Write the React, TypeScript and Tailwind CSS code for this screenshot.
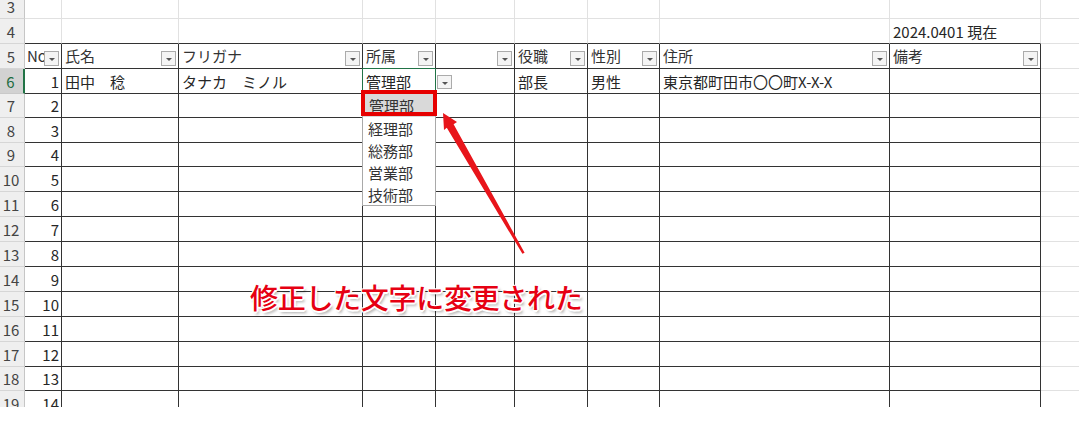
import React from 'react';

const COLW = ['w-[37px]', 'w-[117px]', 'w-[184px]', 'w-[73px]', 'w-[79px]', 'w-[73px]', 'w-[72px]', 'w-[230px]', 'w-[151px]'];
const HEAD = ['No', '氏名', 'フリガナ', '所属', '', '役職', '性別', '住所', '備考'];
const ROW6 = ['1', '田中　稔', 'タナカ　ミノル', '管理部', '', '部長', '男性', '東京都町田市〇〇町X-X-X', ''];

const BODY_H = ['h-[24px]', 'h-[25px]', 'h-[24px]', 'h-[25px]', 'h-[25px]', 'h-[25px]', 'h-[25px]', 'h-[25px]', 'h-[25px]', 'h-[25px]', 'h-[25px]', 'h-[24px]', 'h-[25px]'];

function RowHeader({ n, active }: { n: number; active?: boolean }) {
  return active ? (
    <div className="w-[25px] shrink-0 border-r-2 border-b border-r-[#217346] border-b-[#c9c9c9] bg-[#d2d2d2] text-[#1d6b40] flex items-center justify-center pr-[2px]">
      {n}
    </div>
  ) : (
    <div className="w-[25px] shrink-0 border-r border-b border-r-[#c6c6c6] border-b-[#d6d6d6] bg-[#efefef] text-[#444] flex items-center justify-center pr-[2px]">
      {n}
    </div>
  );
}

function FilterBtn() {
  return (
    <div className="shrink-0 self-end mb-[2px] mr-[2px] w-[15px] h-[15px] border border-[#ababab] bg-[#f4f4f4] flex items-center justify-center">
      <div className="w-0 h-0 border-x-[3px] border-x-transparent border-t-[3px] border-t-[#555] mt-[2px]" />
    </div>
  );
}

function TopRow({ n, h, extra }: { n: number; h: string; extra?: React.ReactNode }) {
  return (
    <div className={`flex ${h} shrink-0`}>
      <RowHeader n={n} />
      {COLW.map((w, i) => (
        <div
          key={i}
          className={`${w} shrink-0 border-r border-b border-r-[#e1e1e1] ${n === 4 ? 'border-b-[#333]' : 'border-b-[#e1e1e1]'} flex items-center pl-[3px] whitespace-nowrap text-[#262626]`}
        >
          {i === 8 ? extra : null}
        </div>
      ))}
      <div className="flex-1 border-b border-b-[#e1e1e1]" />
    </div>
  );
}

export default function App() {
  return (
    <div className="relative w-[1079px] h-[428px] overflow-hidden bg-white font-['Noto_Sans_CJK_JP','Noto_Sans',sans-serif] text-[15px] leading-none">
      <div className="h-[407px] overflow-hidden flex flex-col">
        <div className="mt-[-6px] flex flex-col">
          <TopRow n={3} h="h-[25px]" />
          <TopRow n={4} h="h-[25px]" extra={<span>2024.0401 現在</span>} />

          {/* header row 5 */}
          <div className="flex h-[25px] shrink-0">
            <RowHeader n={5} />
            {COLW.map((w, i) => (
              <div key={i} className={`${w} shrink-0 border-r border-b border-[#333] flex min-w-0`}>
                <span className={`flex-1 min-w-0 overflow-x-hidden whitespace-nowrap self-center leading-[20px] text-[#333] ${i === 0 ? 'pl-[2px]' : 'pl-[3px]'}`}>
                  {HEAD[i]}
                </span>
                <FilterBtn />
              </div>
            ))}
            <div className="flex-1 border-b border-b-[#e1e1e1]" />
          </div>

          {/* data row 6 */}
          <div className="flex h-[25px] shrink-0">
            <RowHeader n={6} active />
            {COLW.map((w, i) => (
              <div
                key={i}
                className={`${w} shrink-0 border-r border-b border-[#333] flex items-center whitespace-nowrap text-[#262626] ${i === 0 ? 'justify-end pr-[2px]' : 'pl-[3px]'}`}
              >
                {ROW6[i]}
              </div>
            ))}
            <div className="flex-1 border-b border-b-[#e1e1e1]" />
          </div>

          {BODY_H.map((h, r) => (
            <div key={r} className={`flex ${h} shrink-0`}>
              <RowHeader n={r + 7} />
              {COLW.map((w, i) => (
                <div
                  key={i}
                  className={`${w} shrink-0 border-r border-b border-[#333] flex items-center whitespace-nowrap text-[#262626] ${i === 0 ? 'justify-end pr-[2px]' : 'pl-[3px]'}`}
                >
                  {i === 0 ? r + 2 : null}
                </div>
              ))}
              <div className="flex-1 border-b border-b-[#e1e1e1]" />
            </div>
          ))}
        </div>
      </div>

      {/* selected cell border */}
      <div className="absolute left-[362px] top-[68px] w-[74px] h-[26px] border border-[#217346]" />

      {/* cell dropdown button */}
      <div className="absolute left-[437px] top-[75px] w-[15px] h-[14px] border border-[#ababab] bg-[#f4f4f4] flex items-center justify-center">
        <div className="w-0 h-0 border-x-[3px] border-x-transparent border-t-[3px] border-t-[#555] mt-[2px]" />
      </div>

      {/* dropdown list */}
      <div className="absolute left-[362px] top-[92px] w-[74px] border border-[#a9a9a9] bg-white flex flex-col text-[#333]">
        <div className="h-[24px] bg-[#d9d9d9] flex items-center pl-[6px]">管理部</div>
        <div className="h-[22px] flex items-center pl-[5px]">経理部</div>
        <div className="h-[22px] flex items-center pl-[5px]">総務部</div>
        <div className="h-[22px] flex items-center pl-[5px]">営業部</div>
        <div className="h-[22px] flex items-center pl-[5px]">技術部</div>
      </div>

      {/* red highlight box */}
      <div className="absolute left-[361px] top-[90px] w-[76px] h-[26px] border-[4px] border-[#e60000]" />

      {/* arrow */}
      <svg className="absolute left-0 top-0 pointer-events-none" width="1079" height="428" viewBox="0 0 1079 428">
        <polygon
          points="443,113 457,122 453.6,124.2 524.6,252.8 522.4,253.8 446.8,127.8 444,130"
          fill="#e8151b"
        />
      </svg>

      {/* annotation */}
      <div className="absolute left-[250px] top-[283px] text-[28px] leading-none font-medium tracking-[-0.3px] text-[#e60012] whitespace-nowrap [text-shadow:1px_1px_0_#fff,-1px_-1px_0_#fff,1px_-1px_0_#fff,-1px_1px_0_#fff,0_2px_0_#fff,2px_0_0_#fff,2px_3px_3px_rgba(0,0,0,0.35)]">
        修正した文字に変更された
      </div>
    </div>
  );
}
